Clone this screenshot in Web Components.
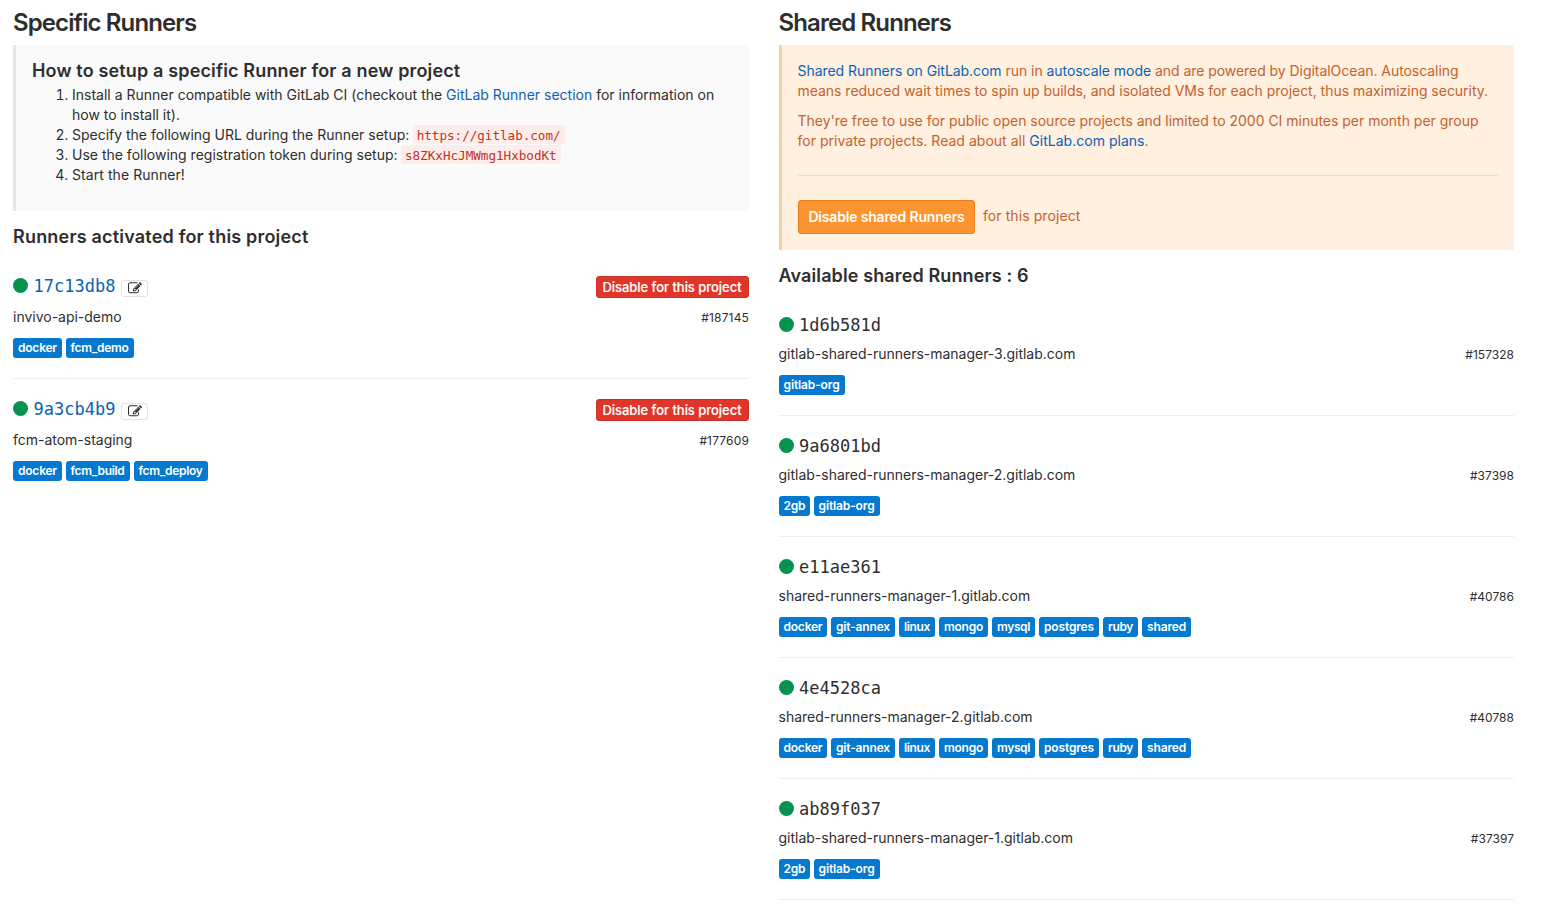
<!DOCTYPE html>
<html lang="en">
<head>
<meta charset="utf-8">
<title>Runners</title>
<style>
html,body{margin:0;background:#fff;height:913px;overflow:hidden}
body{font:400 14px/20px Inter,"Liberation Sans",sans-serif;color:#2e2e2e}
</style>
</head>
<body>
<runners-page></runners-page>
<script>
const define = (name, html, setup) => {
  const tpl = document.createElement('template');
  tpl.innerHTML = html;
  customElements.define(name, class extends HTMLElement {
    constructor() {
      super();
      this.attachShadow({mode: 'open'}).append(tpl.content.cloneNode(true));
    }
    connectedCallback() { if (setup) setup(this, this.shadowRoot); }
  });
};

define('ui-link', `<style>
:host{display:inline;color:#0b62b3}
a{color:inherit;text-decoration:none;cursor:pointer}
</style><a><slot></slot></a>`);

define('ui-code', `<style>
:host{display:inline-block;box-sizing:border-box;height:19px;line-height:19px;padding:1px 4px 0;margin:0 0 0 -.5px;border-radius:3px;background:#fcedeb;color:#c0341d;
font-family:"DejaVu Sans Mono",monospace;font-size:12.6px;vertical-align:top}
</style><slot></slot>`);

define('ui-button', `<style>
:host{display:block}
button{box-sizing:border-box;display:block;width:100%;height:34px;padding:0 0 0 1px;border:1px solid #e97d1d;border-radius:3px;background:#fc9430;color:#fff;
font:600 14px/32px Inter,sans-serif;letter-spacing:-.18px;text-align:center;white-space:nowrap}
:host([kind=danger]) button{height:22px;padding:1px 1px 0 0;border-color:#c9302a;background:#e03529;font:500 13px/19px Inter,sans-serif;letter-spacing:-.03px;-webkit-text-stroke:.15px #fff}
</style><button type="button"><slot></slot></button>`);

define('ui-heading', `<style>
:host{display:block;white-space:nowrap;font-weight:600}
h3,h4{margin:0;font:inherit}
h3{font-size:24px;line-height:30px;letter-spacing:-.89px}
h4{font-size:18px;line-height:22px;letter-spacing:var(--track,.15px)}
</style><slot></slot>`, (el, root) => {
  const tag = el.getAttribute('level') === '3' ? 'h3' : 'h4';
  const slot = root.querySelector('slot');
  if (slot.parentNode !== root) return;
  const h = document.createElement(tag);
  slot.replaceWith(h);
  h.append(slot);
});

define('call-out', `<style>
:host{display:block;box-sizing:border-box;border-left:3px solid #e5e5e5;background:#fafafa;padding:15px 16px}
:host([kind=warning]){border-left-color:#ffce9a;background:#fff0e0;color:#c4622d}
</style><slot></slot>`);

define('status-dot', `<style>
:host{display:block;width:15px;height:15px;border-radius:50%;background:#06924f;margin-bottom:1px}
</style>`);

define('edit-button', `<style>
:host{display:block}
button{box-sizing:border-box;display:grid;place-items:center;width:27px;height:17px;padding:0 0 0 1px;border:1px solid #e3e3e3;border-radius:3px;background:#fff;color:#2e2e2e}
svg{display:block}
</style><button type="button" aria-label="Edit"><svg width="14" height="13" viewBox="0 0 1792 1664" fill="currentColor"><path d="M888 1088l116-116-152-152-116 116v56h96v96h56zm440-720q-16-16-33 1L945 719q-17 17-1 33t33-1l350-350q17-17 1-33zm80 594v190q0 119-84.500 203.500T1120 1440H288q-119 0-203.500-84.500T0 1152V320q0-119 84.500-203.500T288 32h832q63 0 117 25 15 7 18 23 3 17-9 29l-49 49q-14 14-32 8-23-6-45-6H288q-66 0-113 47t-47 113v832q0 66 47 113t113 47h832q66 0 113-47t47-113v-126q0-13 9-22l64-64q15-15 35-7t20 29zm-96-738l288 288-672 672H640V896zm444 132l-92 92-288-288 92-92q28-28 68-28t68 28l152 152q28 28 28 68t-28 68z"/></svg></button>`);

define('runner-tag', `<style>
:host{display:block;box-sizing:border-box;height:20px;padding-left:5px;border-radius:3px;background:#0579cf;color:#fff;font-size:12px;font-weight:600;line-height:20px;white-space:nowrap}
</style><slot></slot>`);

// name: [box width, letter spacing]
const TAGS = {
  'docker': [48.500, -.22], 'fcm_demo': [68, -.31], 'fcm_build': [64, -.31], 'fcm_deploy': [74, -.32],
  'gitlab-org': [66, -.13], '2gb': [31, -.3], 'git-annex': [64, -.17], 'linux': [36, -.36],
  'mongo': [49, -.25], 'mysql': [43, -.38], 'postgres': [60, -.15], 'ruby': [35, -.36], 'shared': [49, -.15]
};

define('runner-item', `<style>
:host{display:flex;flex-direction:column;box-sizing:border-box;height:121px;padding:19px 0 20px;border-bottom:1px solid #efefef}
:host([specific]){height:123px}
:host([last]){border-bottom-color:transparent}
.row{display:flex;justify-content:space-between}
.top{height:22px;align-items:center}
.title{display:flex;align-items:center;gap:5.500px}
.hash{font:400 17px/22px "DejaVu Sans Mono",monospace;white-space:pre}
edit-button{margin:5px 0 0 0}
ui-button{width:153px;margin-top:2px}
.mid{height:20px;margin-top:8px}
:host([specific]) .mid{margin-top:10px}
.id{font-size:12px;line-height:22px;letter-spacing:.02px}
:host([specific]) .id{letter-spacing:.15px}
.tags{display:flex;gap:4px;margin-top:11px}
</style>
<div class="row top"><div class="title"><status-dot></status-dot><span class="hash"></span></div></div>
<div class="row mid"><span class="name"></span><span class="id"></span></div>
<div class="tags"></div>`, (el, root) => {
  if (root.querySelector('runner-tag')) return;
  const hash = root.querySelector('.hash');
  if (el.hasAttribute('specific')) {
    const link = document.createElement('ui-link');
    link.textContent = el.getAttribute('hash');
    hash.append(link);
    root.querySelector('.title').append(document.createElement('edit-button'));
    const btn = document.createElement('ui-button');
    btn.setAttribute('kind', 'danger');
    btn.textContent = 'Disable for this project';
    root.querySelector('.top').append(btn);
  } else hash.textContent = el.getAttribute('hash');
  const name = root.querySelector('.name'), id = root.querySelector('.id');
  name.textContent = el.getAttribute('name');
  name.style.letterSpacing = '-.01px';
  id.textContent = '#' + el.getAttribute('number');
  for (const t of el.getAttribute('tags').split(' ')) {
    const tag = document.createElement('runner-tag');
    tag.textContent = t;
    tag.style.width = TAGS[t][0] + 'px';
    tag.style.letterSpacing = TAGS[t][1] + 'px';
    root.querySelector('.tags').append(tag);
  }
});

define('specific-runners', `<style>
:host{display:block}
call-out{height:166px;margin:7px 0 15px}
ol{margin:3px 0 0;padding:0 0 0 40px}
li{padding:0;white-space:nowrap}
.url{letter-spacing:-.01px}
.start{letter-spacing:.07px}
.list{margin-top:8px}
</style>
<ui-heading level="3">Specific Runners</ui-heading>
<call-out>
<ui-heading>How to setup a specific Runner for a new project</ui-heading>
<ol>
<li>Install a Runner compatible with GitLab CI (checkout the <ui-link>GitLab Runner section</ui-link> for information on<br>how to install it).</li>
<li class="url">Specify the following URL during the Runner setup: <ui-code>https://gitlab.com/</ui-code></li>
<li>Use the following registration token during setup: <ui-code>s8ZKxHcJMWmg1HxbodKt</ui-code></li>
<li class="start">Start the Runner!</li>
</ol>
</call-out>
<ui-heading style="--track:.19px">Runners activated for this project</ui-heading>
<div class="list">
<runner-item specific hash="17c13db8" name="invivo-api-demo" number="187145" tags="docker fcm_demo"></runner-item>
<runner-item specific last hash="9a3cb4b9" name="fcm-atom-staging" number="177609" tags="docker fcm_build fcm_deploy"></runner-item>
</div>`);

define('shared-runners', `<style>
:host{display:block}
call-out{height:205px;margin:7px 0 15px}
p{margin:0 0 10px;white-space:nowrap;letter-spacing:-.012px}
p:first-child{margin-top:1px;letter-spacing:-.05px}
p .wide{letter-spacing:-.025px}
p .plans{letter-spacing:.02px}
hr{height:0;margin:24px 0;border:0;border-top:1px solid #e6ddd6}
.action{display:flex;gap:8.500px;align-items:center}
.action ui-button{width:177px}
.action span{margin-bottom:2px;letter-spacing:.08px}
.list{margin-top:8px}
</style>
<ui-heading level="3">Shared Runners</ui-heading>
<call-out kind="warning">
<p><ui-link>Shared Runners on GitLab.com</ui-link> run in <ui-link>autoscale mode</ui-link> and are powered by DigitalOcean. Autoscaling<br><span class="wide">means reduced wait times to spin up builds, and isolated VMs for each project, thus maximizing security.</span></p>
<p>They're free to use for public open source projects and limited to 2000 CI minutes per month per group<br><span class="plans">for private projects. Read about all <ui-link>GitLab.com plans</ui-link>.</span></p>
<hr>
<div class="action"><ui-button>Disable shared Runners</ui-button><span>for this project</span></div>
</call-out>
<ui-heading style="--track:.12px">Available shared Runners : 6</ui-heading>
<div class="list">
<runner-item hash="1d6b581d" name="gitlab-shared-runners-manager-3.gitlab.com" number="157328" tags="gitlab-org"></runner-item>
<runner-item hash="9a6801bd" name="gitlab-shared-runners-manager-2.gitlab.com" number="37398" tags="2gb gitlab-org"></runner-item>
<runner-item hash="e11ae361" name="shared-runners-manager-1.gitlab.com" number="40786" tags="docker git-annex linux mongo mysql postgres ruby shared"></runner-item>
<runner-item hash="4e4528ca" name="shared-runners-manager-2.gitlab.com" number="40788" tags="docker git-annex linux mongo mysql postgres ruby shared"></runner-item>
<runner-item hash="ab89f037" name="gitlab-shared-runners-manager-1.gitlab.com" number="37397" tags="2gb gitlab-org"></runner-item>
</div>`);

define('runners-page', `<style>
:host{display:grid;grid-template-columns:736px 735.500px;column-gap:29.500px;align-items:start;padding:8px 0 0 13px}
</style>
<specific-runners></specific-runners>
<shared-runners></shared-runners>`);
</script>
</body>
</html>
